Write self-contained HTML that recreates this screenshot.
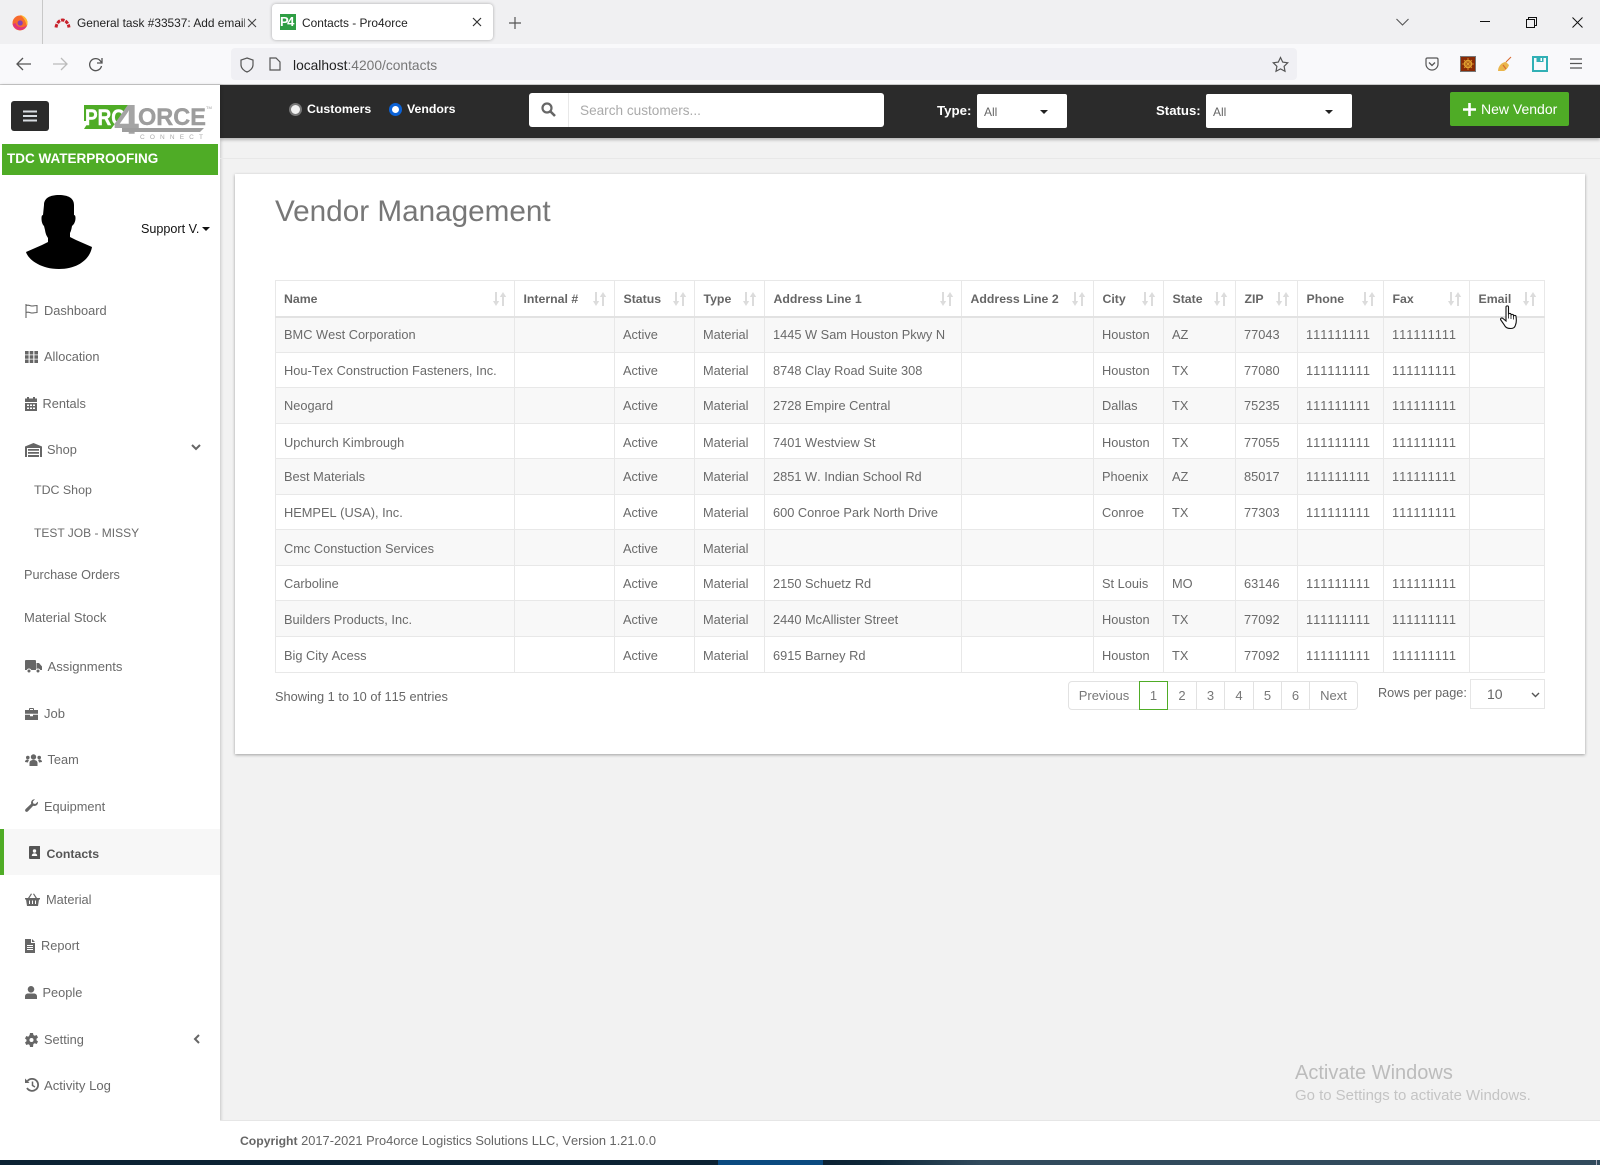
<!DOCTYPE html>
<html><head><meta charset="utf-8"><title>Contacts - Pro4orce</title>
<style>
*{box-sizing:border-box}
html,body{margin:0;padding:0;width:1600px;height:1165px;overflow:hidden;background:#f2f2f2;font-family:"Liberation Sans",sans-serif;color:#666}
.a{position:absolute}
.t{position:absolute;white-space:nowrap;line-height:20px;font-size:13px}
svg{position:absolute;display:block}
.nav{color:#6a6a6a;font-size:12.8px}
table{position:absolute;left:275px;top:280px;width:1269px;border-collapse:collapse;table-layout:fixed;font-size:12.8px;color:#6a6a6a}
th,td{border:1px solid #e8e8e8;padding:0 0 0 8px;text-align:left;white-space:nowrap;overflow:hidden}
td{font-kerning:none}
th{height:36px;border-bottom:2px solid #e2e2e2;font-weight:bold;position:relative;color:#666;font-size:12.3px;padding:2px 0 0 8.5px}
th:first-child{padding-left:8px}
tbody tr:nth-child(odd){background:#f8f8f8}
tbody tr:nth-child(4) td,tbody tr:nth-child(7) td,tbody tr:nth-child(9) td,tbody tr:nth-child(10) td{padding-top:2px}
tbody tr:nth-child(2) td,tbody tr:nth-child(6) td,tbody tr:nth-child(8) td{padding-top:1px}
th svg{right:7px;top:11px}
.pg{position:absolute;top:681px;height:29px;border:1px solid #e2e2e2;border-left:0;background:#fff;font-size:13px;line-height:27px;text-align:center;color:#777}
</style></head><body>

<!-- browser chrome -->
<div class="a" style="left:0;top:0;width:1600px;height:44px;background:#f0f0f2"></div>
<div class="a" style="left:0;top:44px;width:1600px;height:41px;background:#f9f9fb;border-bottom:1px solid #ccc"></div>
<div class="a" style="left:42px;top:0;width:1px;height:44px;background:#c8c8c8"></div>
<svg style="left:12px;top:14px" width="16" height="17" viewBox="0 0 16 17"><circle cx="8" cy="9" r="7.500" fill="#f76a2d"/><path d="M.7 10a7.500 7.500 0 0 0 14.500 1C12 14.500 5 14 3.500 9z" fill="#e0357a"/><path d="M8 .8c4 1 7.500 4 7.500 8.200 0 1-.3 2-.7 3C14 8 12 4 8 .8z" fill="#ffb52e"/><circle cx="8.200" cy="9" r="2.600" fill="#8a3fb0"/></svg>
<svg style="left:54px;top:15px" width="17" height="13" viewBox="0 0 17 13"><path d="M2 12.500A6.600 9 0 0 1 15 12.500" fill="none" stroke="#c8202a" stroke-width="3" stroke-dasharray="3.500 1.100"/></svg>
<div class="t" style="left:77px;top:13px;font-size:11.9px;color:#222;width:168px;overflow:hidden;">General task #33537: Add email</div>
<svg style="left:247px;top:18px" width="10" height="10" viewBox="0 0 10 10"><path d="M1 1l8 8M9 1l-8 8" stroke="#444" stroke-width="1.100"/></svg>
<div class="a" style="left:272px;top:4px;width:221px;height:36px;background:#fff;border-radius:4px;box-shadow:0 0 3px rgba(0,0,0,.3)"></div>
<div class="a" style="left:280px;top:14px;width:16px;height:16px;background:#2f9e44;color:#fff;font:bold 13px/16px 'Liberation Sans',sans-serif;letter-spacing:-1.500px;text-align:left">P4</div>
<div class="t" style="left:302px;top:13px;font-size:11.900px;color:#222">Contacts - Pro4orce</div>
<svg style="left:472px;top:17px" width="10" height="10" viewBox="0 0 10 10"><path d="M1 1l8 8M9 1l-8 8" stroke="#333" stroke-width="1.200"/></svg>
<svg style="left:509px;top:17px" width="12" height="12" viewBox="0 0 12 12"><path d="M6 0v12M0 6h12" stroke="#555" stroke-width="1.200"/></svg>
<svg style="left:1396px;top:18px" width="13" height="8" viewBox="0 0 13 8"><path d="M.5 1l6 6 6-6" fill="none" stroke="#555" stroke-width="1.100"/></svg>
<div class="a" style="left:1480px;top:21px;width:10px;height:1px;background:#111"></div>
<svg style="left:1526px;top:17px" width="11" height="11" viewBox="0 0 11 11"><path d="M.5 2.500h8v8h-8zM2.500 2.500v-2h8v8h-2" fill="none" stroke="#111"/></svg>
<svg style="left:1572px;top:17px" width="11" height="11" viewBox="0 0 11 11"><path d="M.5.500l10 10M10.500.500l-10 10" stroke="#111"/></svg>

<svg style="left:16px;top:57px" width="16" height="14" viewBox="0 0 16 14"><path d="M7 1L1 7l6 6M1 7h14" fill="none" stroke="#555" stroke-width="1.300"/></svg>
<svg style="left:52px;top:57px" width="16" height="14" viewBox="0 0 16 14"><path d="M9 1l6 6-6 6M15 7H1" fill="none" stroke="#bbb" stroke-width="1.300"/></svg>
<svg style="left:88px;top:57px" width="16" height="15" viewBox="0 0 16 15"><path d="M13.500 9a6 6 0 1 1-1.500-5.500L14 6M14 1v5H9" fill="none" stroke="#555" stroke-width="1.300"/></svg>
<div class="a" style="left:231px;top:48px;width:1066px;height:32px;background:#f0f0f4;border-radius:4px"></div>
<svg style="left:240px;top:57px" width="14" height="16" viewBox="0 0 14 16"><path d="M7 1l6 2v5c0 3-3 6-6 7-3-1-6-4-6-7V3z" fill="none" stroke="#555" stroke-width="1.200"/></svg>
<svg style="left:269px;top:57px" width="12" height="14" viewBox="0 0 12 14"><path d="M1 1h6l4 4v8H1z" fill="none" stroke="#555" stroke-width="1.200"/></svg>
<div class="t" style="left:293px;top:56px;font-size:13.800px;color:#777"><span style="color:#222">localhost</span>:4200/contacts</div>
<svg style="left:1272px;top:56px" width="17" height="17" viewBox="0 0 17 17"><path d="M8.500 1.500l2.200 4.600 5 .7-3.600 3.500.9 5-4.500-2.400L4 15.300l.9-5L1.300 6.800l5-.7z" fill="none" stroke="#555" stroke-width="1.200"/></svg>
<svg style="left:1425px;top:57px" width="14" height="14" viewBox="0 0 14 14"><path d="M1 2.500C1 1.500 1.500 1 2.500 1h9c1 0 1.500.5 1.500 1.500V7a6 6 0 0 1-12 0z" fill="none" stroke="#555" stroke-width="1.200"/><path d="M4 5.500l3 3 3-3" fill="none" stroke="#555" stroke-width="1.300"/></svg>
<div class="a" style="left:1460px;top:56px;width:16px;height:16px;background:#8a2a05;border:1px solid #777"></div>
<svg style="left:1462px;top:58px" width="12" height="12" viewBox="0 0 12 12"><circle cx="6" cy="6" r="3.500" fill="none" stroke="#e0a030" stroke-width="1.600"/><path d="M6 0v12M0 6h12M2 2l8 8M10 2l-8 8" stroke="#e0a030" stroke-width=".8"/></svg>
<svg style="left:1496px;top:56px" width="17" height="16" viewBox="0 0 17 16"><path d="M2 15C2 10 6 6 10 6l3 3c-1 3-3 5-5 6z" fill="#eab54a"/><path d="M10 6l5-5M7 9l3 4" stroke="#d86a30" stroke-width="1.100"/></svg>
<svg style="left:1532px;top:56px" width="16" height="16" viewBox="0 0 16 16"><path d="M1 1h14v14H1z" fill="none" stroke="#31b0b5" stroke-width="2"/><path d="M4.500 1h7v5h-7z" fill="#31b0b5"/><path d="M8.500 2h1.500v3H8.500z" fill="#fff"/></svg>
<svg style="left:1570px;top:58px" width="12" height="11" viewBox="0 0 12 11"><path d="M0 1h12M0 5.500h12M0 10h12" stroke="#555" stroke-width="1.200"/></svg>

<!-- app header -->
<div class="a" style="left:220px;top:85px;width:1380px;height:53px;background:#2b2b2b;box-shadow:0 2px 3px rgba(0,0,0,.25)"></div>
<div class="a" style="left:288.500px;top:103px;width:13px;height:13px;border-radius:50%;background:#f0f0f0;border:2px solid #777"></div>
<div class="t" style="left:307px;top:99px;color:#fff;font-weight:bold;font-size:12.300px">Customers</div>
<div class="a" style="left:388.500px;top:103px;width:13px;height:13px;border-radius:50%;background:#fff;border:3px solid #0b62d6"></div>
<div class="t" style="left:407px;top:99px;color:#fff;font-weight:bold;font-size:12.300px">Vendors</div>

<div class="a" style="left:529px;top:93px;width:355px;height:34px;background:#fff;border-radius:3px"></div>
<div class="a" style="left:568px;top:93px;width:1px;height:34px;background:#e8e8e8"></div>
<svg style="left:541px;top:102px" width="15" height="15" viewBox="0 0 15 15"><circle cx="6" cy="6" r="4.500" fill="none" stroke="#666" stroke-width="2.200"/><path d="M9.500 9.500l4.500 4.500" stroke="#666" stroke-width="2.600"/></svg>
<div class="t" style="left:580px;top:101px;font-size:13.600px;color:#aaa">Search customers...</div>

<div class="t" style="left:937px;top:101px;font-size:13.300px;font-weight:bold;color:#fff">Type:</div>
<div class="a" style="left:977px;top:94px;width:90px;height:34px;background:#fff;border-radius:2px"></div>
<div class="t" style="left:984px;top:102px;font-size:12px;color:#666">All</div>
<div class="a" style="left:1040px;top:110px;border:4px solid transparent;border-top-color:#222;border-bottom:0"></div>

<div class="t" style="left:1156px;top:101px;font-size:13.200px;font-weight:bold;color:#fff">Status:</div>
<div class="a" style="left:1206px;top:94px;width:146px;height:34px;background:#fff;border-radius:2px"></div>
<div class="t" style="left:1213px;top:102px;font-size:12px;color:#666">All</div>
<div class="a" style="left:1325px;top:110px;border:4px solid transparent;border-top-color:#222;border-bottom:0"></div>

<div class="a" style="left:1450px;top:92px;width:119px;height:34px;background:#4fac26;border-radius:2px"></div>
<svg style="left:1463px;top:103px" width="13" height="13" viewBox="0 0 13 13"><path d="M6.500 0v13M0 6.500h13" stroke="#fff" stroke-width="2.600"/></svg>
<div class="t" style="left:1481px;top:99px;font-size:14px;color:#fff">New Vendor</div>

<!-- sidebar -->
<div class="a" style="left:0;top:85px;width:220px;height:1075px;background:#fff;box-shadow:1px 0 3px rgba(0,0,0,.18)"></div>
<div class="a" style="left:11px;top:101px;width:38px;height:30px;background:#2b2b2b;border-radius:3px"></div>
<svg style="left:23px;top:110px" width="14" height="12" viewBox="0 0 14 12"><path d="M0 1.500h14M0 6h14M0 10.500h14" stroke="#d8dde2" stroke-width="2"/></svg>

<svg style="left:84px;top:103px" width="130" height="36" viewBox="0 0 130 36">
<path d="M0 2h45L27 26H0l5-8H0z" fill="#4fac26"/>
<text x="1" y="22" font-family="Liberation Sans" font-weight="bold" font-size="22" fill="#fff" stroke="#fff" stroke-width=".4" textLength="41" lengthAdjust="spacingAndGlyphs">PRO</text>
<text x="30" y="31" font-family="Liberation Sans" font-weight="bold" font-size="42" fill="#a4a4a4" textLength="25" lengthAdjust="spacingAndGlyphs">4</text>
<text x="54" y="22" font-family="Liberation Sans" font-weight="bold" font-size="24" fill="#9d9d9d" stroke="#9d9d9d" stroke-width=".4" textLength="68" lengthAdjust="spacingAndGlyphs">ORCE</text>
<path d="M38 25h82l-4 4H38z" fill="#9d9d9d"/>
<text x="56" y="36" font-family="Liberation Sans" font-size="6.500" fill="#aaa" textLength="63">CONNECT</text>
<text x="122" y="6" font-family="Liberation Sans" font-size="4" fill="#999">TM</text>
</svg>

<div class="a" style="left:2px;top:144px;width:216px;height:31px;background:#4fac26"></div>
<div class="t" style="left:7px;top:149px;font-size:13.500px;font-weight:bold;color:#fff">TDC WATERPROOFING</div>

<svg style="left:26px;top:195px" width="66" height="74" viewBox="0 0 66 74"><path d="M18 10C18 3 24 0 33 0s15 3 15 10v10c1 0 1.500 1 1.500 3s-.5 5-2.500 7l-1 1c-.5 3-1 5-2 7v4l6 3 16 7c-2 12-14 22-33 22S2 64 0 57l16-7 6-3v-4c-2-3-2.500-5-3-8l-1-4c-2-2-2.500-5-2.500-8 0-2 .5-3 1.500-3z" fill="#000"/></svg>
<div class="t" style="left:141px;top:219px;color:#111;font-size:12.600px">Support V.</div>
<div class="a" style="left:202px;top:227px;border:4px solid transparent;border-top-color:#111;border-bottom:0"></div>

<!-- nav items -->
<svg style="left:25px;top:304px" width="13" height="14" viewBox="0 0 13 14"><path d="M1 0v14M1 1.500c3-1 4 .5 6 .5s3-.5 5-.5v7c-2 0-3 .5-5 .5s-3-1.500-6-.5" fill="none" stroke="#666" stroke-width="1.100"/></svg>
<div class="t nav" style="left:44px;top:301px">Dashboard</div>
<svg style="left:25px;top:351px" width="13" height="12" viewBox="0 0 13 12"><path d="M0 0h3.600v3.500H0zM4.700 0h3.600v3.500H4.700zM9.400 0H13v3.500H9.400zM0 4.300h3.600v3.500H0zM4.700 4.300h3.600v3.500H4.700zM9.400 4.300H13v3.500H9.400zM0 8.500h3.600V12H0zM4.700 8.500h3.600V12H4.700zM9.400 8.500H13V12H9.400z" fill="#666"/></svg>
<div class="t nav" style="left:44px;top:347px">Allocation</div>
<svg style="left:25px;top:397px" width="12" height="14" viewBox="0 0 12 14"><path d="M2 0h2v1.500h4V0h2v1.500h2V5H0V1.500h2zM0 6h12v8H0z" fill="#666"/><path d="M2 7.500h2v1.500H2zM5 7.500h2v1.500H5zM8 7.500h2v1.500H8zM2 10.500h2V12H2zM5 10.500h2V12H5zM8 10.500h2V12H8z" fill="#fff"/></svg>
<div class="t nav" style="left:42.500px;top:394px">Rentals</div>
<svg style="left:25px;top:443px" width="17" height="14" viewBox="0 0 17 14"><path d="M8.500 0L17 3.500V14h-2V5H2v9H0V3.500z" fill="#666"/><path d="M3 6h11v1.800H3zM3 9h11v1.800H3zM3 12h11v2H3z" fill="#666"/></svg>
<div class="t nav" style="left:47px;top:440px">Shop</div>
<svg style="left:191px;top:444px" width="10" height="7" viewBox="0 0 10 7"><path d="M1 1l4 4 4-4" fill="none" stroke="#666" stroke-width="2"/></svg>
<div class="t nav" style="left:34px;top:480px;font-size:12.400px">TDC Shop</div>
<div class="t nav" style="left:34px;top:523px;font-size:12px">TEST JOB - MISSY</div>
<div class="t nav" style="left:24px;top:565px;font-size:12.700px">Purchase Orders</div>
<div class="t nav" style="left:24px;top:608px;font-size:13px">Material Stock</div>

<svg style="left:25px;top:660px" width="17" height="13" viewBox="0 0 17 13"><path d="M0 1c0-.6.4-1 1-1h9c.6 0 1 .4 1 1v9H0zM11.500 3h2.500l3 3.500V10h-5.500z" fill="#666"/><circle cx="4" cy="11" r="2" fill="#666" stroke="#fff"/><circle cx="13" cy="11" r="2" fill="#666" stroke="#fff"/></svg>
<div class="t nav" style="left:47.500px;top:657px;font-size:13.100px">Assignments</div>
<svg style="left:25px;top:708px" width="13" height="12" viewBox="0 0 13 12"><path d="M4 2V1c0-.6.400-1 1-1h3c.6 0 1 .4 1 1v1h4v3.800H0V2zm1 0h3V1H5zM0 6.800h5v1.500h3V6.800h5V12H0z" fill="#666"/></svg>
<div class="t nav" style="left:44px;top:704px;font-size:13px">Job</div>
<svg style="left:25px;top:754px" width="17" height="12" viewBox="0 0 17 12"><circle cx="8.500" cy="3" r="2.700" fill="#666"/><circle cx="2.800" cy="3.500" r="1.800" fill="#666"/><circle cx="14.200" cy="3.500" r="1.800" fill="#666"/><path d="M4.500 12V9c0-2 1.500-3 4-3s4 1 4 3v3zM0 8c0-1.500 1-2.500 3-2.500l1 .5c-.7 1-1 2-1 2.500zM17 8c0-1.500-1-2.500-3-2.500l-1 .5c.7 1 1 2 1 2.500z" fill="#666"/></svg>
<div class="t nav" style="left:47.500px;top:750px">Team</div>
<svg style="left:25px;top:799px" width="13" height="13" viewBox="0 0 13 13"><path d="M13 3.500a3.500 3.500 0 0 1-4.800 3.200L3 12.200c-.8.800-1.800 1-2.500.2s-.5-1.700.3-2.500l5.400-5.100A3.500 3.500 0 0 1 10 .3L7.800 2.500l.5 2 2 .5L12.700 2.800c.2.200.3.500.3.700z" fill="#666"/></svg>
<div class="t nav" style="left:44px;top:797px">Equipment</div>

<div class="a" style="left:0;top:829px;width:220px;height:46px;background:#f7f7f7"></div>
<div class="a" style="left:0;top:829px;width:4px;height:46px;background:#4fac26"></div>
<svg style="left:29px;top:846px" width="12" height="13" viewBox="0 0 12 13"><path d="M1 0h9.500c.3 0 .5.200.5.500V13H1c-.6 0-1-.4-1-1V1c0-.6.400-1 1-1z" fill="#555"/><circle cx="5.500" cy="5" r="1.700" fill="#fff"/><path d="M2.800 10c0-1.800 1-2.600 2.700-2.600S8.200 8.200 8.200 10z" fill="#fff"/></svg>
<div class="t" style="left:46.500px;top:844px;font-size:12.300px;font-weight:bold;color:#555">Contacts</div>

<svg style="left:25px;top:893px" width="15" height="13" viewBox="0 0 15 13"><path d="M3 5L6 .5l1 .5L4.500 5h6L8 1l1-.5L12 5h3v1.500h-1L13 13H2L1 6.500H0V5z" fill="#666"/><path d="M4.500 7.500v3.500M7.500 7.500v3.500M10.500 7.500v3.500" stroke="#fff"/></svg>
<div class="t nav" style="left:46px;top:890px">Material</div>
<svg style="left:25px;top:939px" width="10" height="14" viewBox="0 0 10 14"><path d="M0 0h6v4h4v10H0zM7 0l3 3H7z" fill="#666"/><path d="M2 6.500h6M2 8.500h6M2 10.500h6" stroke="#fff"/></svg>
<div class="t nav" style="left:41px;top:936px">Report</div>
<svg style="left:25px;top:986px" width="12" height="13" viewBox="0 0 12 13"><circle cx="6" cy="3.300" r="3.300" fill="#666"/><path d="M0 13v-2.500C0 8.500 1.500 7.500 3 7.500h6c1.500 0 3 1 3 3V13z" fill="#666"/></svg>
<div class="t nav" style="left:42.500px;top:983px">People</div>
<svg style="left:25px;top:1033px" width="13" height="14" viewBox="0 0 13 14"><path d="M5 0h3l.4 2 1.300.7 2-.7 1.300 2.500-1.500 1.300v1.400l1.500 1.300-1.300 2.500-2-.7-1.300.7L8 14H5l-.4-2-1.300-.7-2 .7L0 9.500l1.500-1.300V6.800L0 5.500 1.300 3l2 .7L4.600 2z" fill="#666"/><circle cx="6.500" cy="7" r="2" fill="#fff"/></svg>
<div class="t nav" style="left:44px;top:1030px">Setting</div>
<svg style="left:193px;top:1034px" width="7" height="10" viewBox="0 0 7 10"><path d="M6 1L2 5l4 4" fill="none" stroke="#666" stroke-width="2"/></svg>
<svg style="left:25px;top:1078px" width="14" height="14" viewBox="0 0 14 14"><path d="M2.500 3A6 6 0 1 1 2 10" fill="none" stroke="#666" stroke-width="1.800"/><path d="M0 .5l4.500 4.500H0z" fill="#666"/><path d="M7.500 3.500V7.500l2.500 1.500" fill="none" stroke="#666" stroke-width="1.500"/></svg>
<div class="t nav" style="left:44px;top:1076px;font-size:13.100px">Activity Log</div>

<!-- content -->
<div class="a" style="left:220px;top:158px;width:1380px;height:1px;background:#e8e8e8"></div>
<div class="a" style="left:235px;top:174px;width:1350px;height:580px;background:#fff;box-shadow:0 1px 3px rgba(0,0,0,.35)"></div>
<div class="t" style="left:275px;top:192px;font-size:29.700px;line-height:40px;color:#777">Vendor Management</div>

<table>
<colgroup><col style="width:239px"><col style="width:100px"><col style="width:80px"><col style="width:70px"><col style="width:197px"><col style="width:132px"><col style="width:70px"><col style="width:72px"><col style="width:62px"><col style="width:86px"><col style="width:86px"><col style="width:75px"></colgroup>
<thead><tr>
<th>Name<svg width="14" height="14" viewBox="0 0 14 14"><path d="M2 0h2v9h2.200L3 14 0 9h2zM10 0l3.200 5H11v9H9V5H6.800z" fill="#dcdcdc"/></svg></th>
<th>Internal #<svg width="14" height="14" viewBox="0 0 14 14"><path d="M2 0h2v9h2.200L3 14 0 9h2zM10 0l3.200 5H11v9H9V5H6.800z" fill="#dcdcdc"/></svg></th>
<th>Status<svg width="14" height="14" viewBox="0 0 14 14"><path d="M2 0h2v9h2.200L3 14 0 9h2zM10 0l3.200 5H11v9H9V5H6.800z" fill="#dcdcdc"/></svg></th>
<th>Type<svg width="14" height="14" viewBox="0 0 14 14"><path d="M2 0h2v9h2.200L3 14 0 9h2zM10 0l3.200 5H11v9H9V5H6.800z" fill="#dcdcdc"/></svg></th>
<th>Address Line 1<svg width="14" height="14" viewBox="0 0 14 14"><path d="M2 0h2v9h2.200L3 14 0 9h2zM10 0l3.200 5H11v9H9V5H6.800z" fill="#dcdcdc"/></svg></th>
<th>Address Line 2<svg width="14" height="14" viewBox="0 0 14 14"><path d="M2 0h2v9h2.200L3 14 0 9h2zM10 0l3.200 5H11v9H9V5H6.800z" fill="#dcdcdc"/></svg></th>
<th>City<svg width="14" height="14" viewBox="0 0 14 14"><path d="M2 0h2v9h2.200L3 14 0 9h2zM10 0l3.200 5H11v9H9V5H6.800z" fill="#dcdcdc"/></svg></th>
<th>State<svg width="14" height="14" viewBox="0 0 14 14"><path d="M2 0h2v9h2.200L3 14 0 9h2zM10 0l3.200 5H11v9H9V5H6.800z" fill="#dcdcdc"/></svg></th>
<th>ZIP<svg width="14" height="14" viewBox="0 0 14 14"><path d="M2 0h2v9h2.200L3 14 0 9h2zM10 0l3.200 5H11v9H9V5H6.800z" fill="#dcdcdc"/></svg></th>
<th>Phone<svg width="14" height="14" viewBox="0 0 14 14"><path d="M2 0h2v9h2.200L3 14 0 9h2zM10 0l3.200 5H11v9H9V5H6.800z" fill="#dcdcdc"/></svg></th>
<th>Fax<svg width="14" height="14" viewBox="0 0 14 14"><path d="M2 0h2v9h2.200L3 14 0 9h2zM10 0l3.200 5H11v9H9V5H6.800z" fill="#dcdcdc"/></svg></th>
<th>Email<svg width="14" height="14" viewBox="0 0 14 14"><path d="M2 0h2v9h2.200L3 14 0 9h2zM10 0l3.200 5H11v9H9V5H6.800z" fill="#dcdcdc"/></svg></th>
</tr></thead>
<tbody>
<tr style="height:36px"><td>BMC West Corporation</td><td></td><td>Active</td><td>Material</td><td>1445 W Sam Houston Pkwy N</td><td></td><td>Houston</td><td>AZ</td><td>77043</td><td>111111111</td><td>111111111</td><td></td></tr>
<tr style="height:35px"><td>Hou-Tex Construction Fasteners, Inc.</td><td></td><td>Active</td><td>Material</td><td>8748 Clay Road Suite 308</td><td></td><td>Houston</td><td>TX</td><td>77080</td><td>111111111</td><td>111111111</td><td></td></tr>
<tr style="height:36px"><td>Neogard</td><td></td><td>Active</td><td>Material</td><td>2728 Empire Central</td><td></td><td>Dallas</td><td>TX</td><td>75235</td><td>111111111</td><td>111111111</td><td></td></tr>
<tr style="height:35px"><td>Upchurch Kimbrough</td><td></td><td>Active</td><td>Material</td><td>7401 Westview St</td><td></td><td>Houston</td><td>TX</td><td>77055</td><td>111111111</td><td>111111111</td><td></td></tr>
<tr style="height:36px"><td>Best Materials</td><td></td><td>Active</td><td>Material</td><td>2851 W. Indian School Rd</td><td></td><td>Phoenix</td><td>AZ</td><td>85017</td><td>111111111</td><td>111111111</td><td></td></tr>
<tr style="height:35px"><td>HEMPEL (USA), Inc.</td><td></td><td>Active</td><td>Material</td><td>600 Conroe Park North Drive</td><td></td><td>Conroe</td><td>TX</td><td>77303</td><td>111111111</td><td>111111111</td><td></td></tr>
<tr style="height:36px"><td>Cmc Constuction Services</td><td></td><td>Active</td><td>Material</td><td></td><td></td><td></td><td></td><td></td><td></td><td></td><td></td></tr>
<tr style="height:35px"><td>Carboline</td><td></td><td>Active</td><td>Material</td><td>2150 Schuetz Rd</td><td></td><td>St Louis</td><td>MO</td><td>63146</td><td>111111111</td><td>111111111</td><td></td></tr>
<tr style="height:36px"><td>Builders Products, Inc.</td><td></td><td>Active</td><td>Material</td><td>2440 McAllister Street</td><td></td><td>Houston</td><td>TX</td><td>77092</td><td>111111111</td><td>111111111</td><td></td></tr>
<tr style="height:36px"><td>Big City Acess</td><td></td><td>Active</td><td>Material</td><td>6915 Barney Rd</td><td></td><td>Houston</td><td>TX</td><td>77092</td><td>111111111</td><td>111111111</td><td></td></tr>
</tbody></table>

<svg style="left:1500px;top:305px" width="19" height="25" viewBox="0 0 19 25"><path d="M6 2c0-1.500 2.500-1.500 2.500 0v7.500c0-1.500 2.500-1.500 2.500 0v1c0-1.500 2.500-1.500 2.500 0v1c0-1.500 2.500-1.500 2.500 0 .5 3 .5 6-.5 8.500-.5 2-2 3.500-4.500 3.500-4 0-5.500-1-7-4L.8 15c-.8-1.500 1-2.800 2.200-1.500L6 16z" fill="#fff" stroke="#111" stroke-width="1.100"/><path d="M8.500 9.500v4M11 10.500v3.500M13.500 11.500v3" stroke="#111" stroke-width=".8"/></svg>

<div class="t" style="left:275px;top:687px;font-size:12.800px;color:#666;font-kerning:none">Showing 1 to 10 of 115 entries</div>

<div class="pg" style="left:1068px;width:72px;border-left:1px solid #e2e2e2;border-radius:4px 0 0 4px">Previous</div>
<div class="pg" style="left:1139px;width:29px;border:1px solid #4fac26">1</div>
<div class="pg" style="left:1168px;width:29px">2</div>
<div class="pg" style="left:1197px;width:28px">3</div>
<div class="pg" style="left:1225px;width:29px">4</div>
<div class="pg" style="left:1254px;width:28px">5</div>
<div class="pg" style="left:1282px;width:28px">6</div>
<div class="pg" style="left:1310px;width:48px;border-radius:0 4px 4px 0">Next</div>

<div class="t" style="left:1378px;top:683px;font-size:12.700px;color:#666">Rows per page:</div>
<div class="a" style="left:1470px;top:679px;width:75px;height:30px;border:1px solid #e6e6e6;background:#fff"></div>
<div class="t" style="left:1487px;top:684px;font-size:14px;color:#666">10</div>
<svg style="left:1531px;top:692px" width="9" height="6" viewBox="0 0 9 6"><path d="M1 1l3.500 3.500L8 1" fill="none" stroke="#555" stroke-width="1.400"/></svg>

<div class="t" style="left:1295px;top:1061px;font-size:20px;line-height:24px;color:#bcbcbc">Activate Windows</div>
<div class="t" style="left:1295px;top:1086px;font-size:14.950px;color:#c4c4c4">Go to Settings to activate Windows.</div>

<!-- footer -->
<div class="a" style="left:220px;top:1120px;width:1380px;height:40px;background:#fff;border-top:1px solid #e6e6e6"></div>
<div class="t" style="left:240px;top:1131px;font-size:12.850px;color:#666;font-kerning:none"><b style="font-size:12.200px">Copyright</b> 2017-2021 Pro4orce Logistics Solutions LLC, Version 1.21.0.0</div>

<!-- taskbar -->
<div class="a" style="left:0;top:1160px;width:1600px;height:5px;background:linear-gradient(90deg,#0c2233 0,#0c2233 823px,#0f2839 880px,#314a5c 980px,#314a5c 100%)"></div>
<div class="a" style="left:718px;top:1160px;width:105px;height:5px;background:#0b4a80"></div>
<div class="a" style="left:1596px;top:1160px;width:1px;height:5px;background:#aab"></div>
</body></html>
